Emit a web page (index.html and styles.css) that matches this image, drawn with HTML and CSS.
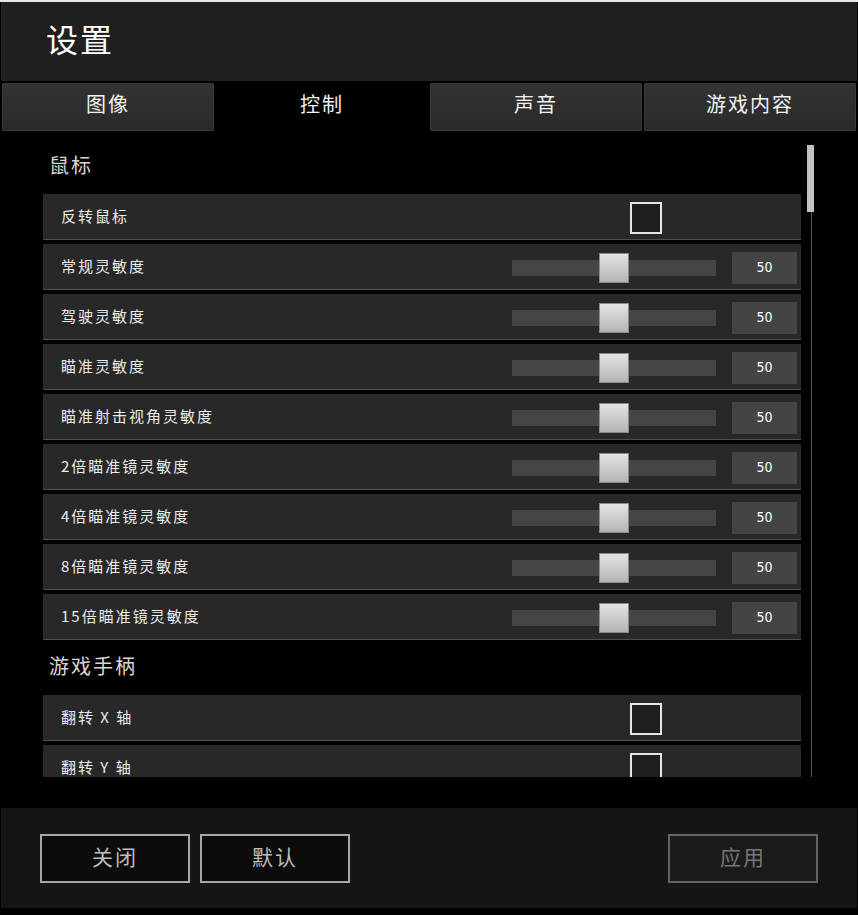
FILE: index.html
```html
<!DOCTYPE html>
<html lang="zh-CN">
<head>
    <meta charset="UTF-8">
    <meta name="viewport" content="width=device-width, initial-scale=1.0">
    <title>设置</title>
    <link rel="stylesheet" href="styles.css">
</head>
<body>
    <div class="top-strip"></div>
    <div class="window">
        <div class="header">设置</div>

        <div class="tabs">
            <div class="tab">图像</div>
            <div class="tab active">控制</div>
            <div class="tab">声音</div>
            <div class="tab">游戏内容</div>
        </div>

        <div class="content">
            <div class="scroll-list">
                <div class="section-title">鼠标</div>
                <div class="row">
                    <span class="label">反转鼠标</span>
                    <span class="checkbox"></span>
                </div>
                <div class="row">
                    <span class="label">常规灵敏度</span>
                    <span class="slider"><span class="thumb"></span></span>
                    <span class="value">50</span>
                </div>
                <div class="row">
                    <span class="label">驾驶灵敏度</span>
                    <span class="slider"><span class="thumb"></span></span>
                    <span class="value">50</span>
                </div>
                <div class="row">
                    <span class="label">瞄准灵敏度</span>
                    <span class="slider"><span class="thumb"></span></span>
                    <span class="value">50</span>
                </div>
                <div class="row">
                    <span class="label">瞄准射击视角灵敏度</span>
                    <span class="slider"><span class="thumb"></span></span>
                    <span class="value">50</span>
                </div>
                <div class="row">
                    <span class="label">2倍瞄准镜灵敏度</span>
                    <span class="slider"><span class="thumb"></span></span>
                    <span class="value">50</span>
                </div>
                <div class="row">
                    <span class="label">4倍瞄准镜灵敏度</span>
                    <span class="slider"><span class="thumb"></span></span>
                    <span class="value">50</span>
                </div>
                <div class="row">
                    <span class="label">8倍瞄准镜灵敏度</span>
                    <span class="slider"><span class="thumb"></span></span>
                    <span class="value">50</span>
                </div>
                <div class="row">
                    <span class="label">15倍瞄准镜灵敏度</span>
                    <span class="slider"><span class="thumb"></span></span>
                    <span class="value">50</span>
                </div>

                <div class="section-title">游戏手柄</div>
                <div class="row">
                    <span class="label">翻转 X 轴</span>
                    <span class="checkbox"></span>
                </div>
                <div class="row">
                    <span class="label">翻转 Y 轴</span>
                    <span class="checkbox"></span>
                </div>
            </div>
            <div class="scrollbar">
                <div class="scroll-thumb"></div>
            </div>
        </div>

        <div class="footer">
            <button class="btn">关闭</button>
            <button class="btn">默认</button>
            <button class="btn disabled">应用</button>
        </div>
    </div>
</body>
</html>
```

FILE: styles.css
```css
body {
    margin: 0;
    background-color: #000;
    font-family: "Noto Sans CJK SC", "Noto Sans", sans-serif;
    color: #eee;
}
.top-strip {
    height: 2px;
    background-color: #e8e8e8;
}
.window {
    margin: 0 1px;
}
.header {
    height: 73px;
    line-height: 73px;
    padding: 0 0 6px 45px;
    background-color: #202020;
    font-size: 32px;
    letter-spacing: 2px;
    color: #fff;
}
.tabs {
    display: flex;
    gap: 2px;
    margin-top: 2px;
    padding: 0 1px;
    height: 48px;
}
.tab {
    flex: 1;
    display: flex;
    align-items: center;
    justify-content: center;
    box-sizing: border-box;
    padding-bottom: 7px;
    background: linear-gradient(#333, #2a2a2a);
    border: 1px solid #3a3a3a;
    border-radius: 1px;
    font-size: 20px;
    letter-spacing: 2px;
    color: #f2f2f2;
}
.tab.active {
    background: #000;
    border-color: #000;
}
.content {
    position: relative;
    height: 646px;
    overflow: hidden;
}
.scroll-list {
    padding: 12px 0 0 42px;
    width: 758px;
}
.section-title {
    height: 51px;
    line-height: 44px;
    padding-left: 6px;
    font-size: 20px;
    letter-spacing: 2px;
    color: #d6d6d6;
}
.row {
    display: flex;
    align-items: center;
    box-sizing: border-box;
    height: 46px;
    margin-bottom: 4px;
    padding: 2px 0 0 18px;
    background-color: #282828;
    border-bottom: 1px solid #505050;
}
.label {
    flex: 0 0 451px;
    padding-bottom: 4px;
    font-size: 15px;
    letter-spacing: 2px;
    color: #ececec;
}
.checkbox {
    margin-left: 118px;
    width: 28px;
    height: 28px;
    border: 2px solid #e6e6e6;
    background-color: #1e1e1e;
}
.slider {
    position: relative;
    width: 204px;
    height: 16px;
    margin-right: 16px;
    background-color: #454545;
}
.thumb {
    position: absolute;
    left: 87px;
    top: -7px;
    width: 28px;
    height: 28px;
    border: 1px solid #8a8a8a;
    background: linear-gradient(#e4e4e4, #b4b4b4);
}
.value {
    width: 65px;
    height: 32px;
    line-height: 30px;
    text-align: center;
    background-color: #444;
    font-family: "DejaVu Sans Condensed", "Liberation Sans Narrow", sans-serif;
    font-size: 14px;
    color: #fff;
}
.scrollbar {
    position: absolute;
    left: 809px;
    top: 0;
    bottom: 0;
    width: 3px;
}
.scrollbar::before {
    content: "";
    position: absolute;
    left: 1px;
    top: 80px;
    bottom: 0;
    width: 1px;
    background-color: #555;
}
.scroll-thumb {
    position: absolute;
    left: -3px;
    top: 14px;
    width: 7px;
    height: 67px;
    background-color: #c2c2c2;
}
.footer {
    display: flex;
    align-items: center;
    gap: 10px;
    height: 100px;
    margin-top: 31px;
    padding: 0 39px;
    background-color: #151515;
}
.btn {
    width: 150px;
    height: 49px;
    border: 2px solid #a8a8a8;
    background-color: #0c0c0c;
    color: #bdbdbd;
    font-family: "Noto Sans CJK SC", sans-serif;
    font-size: 21px;
    letter-spacing: 2px;
    padding: 0 0 4px 0;
}
.btn.disabled {
    margin-left: auto;
    border-color: #646464;
    background-color: #1b1b1b;
    color: #777;
}
```
